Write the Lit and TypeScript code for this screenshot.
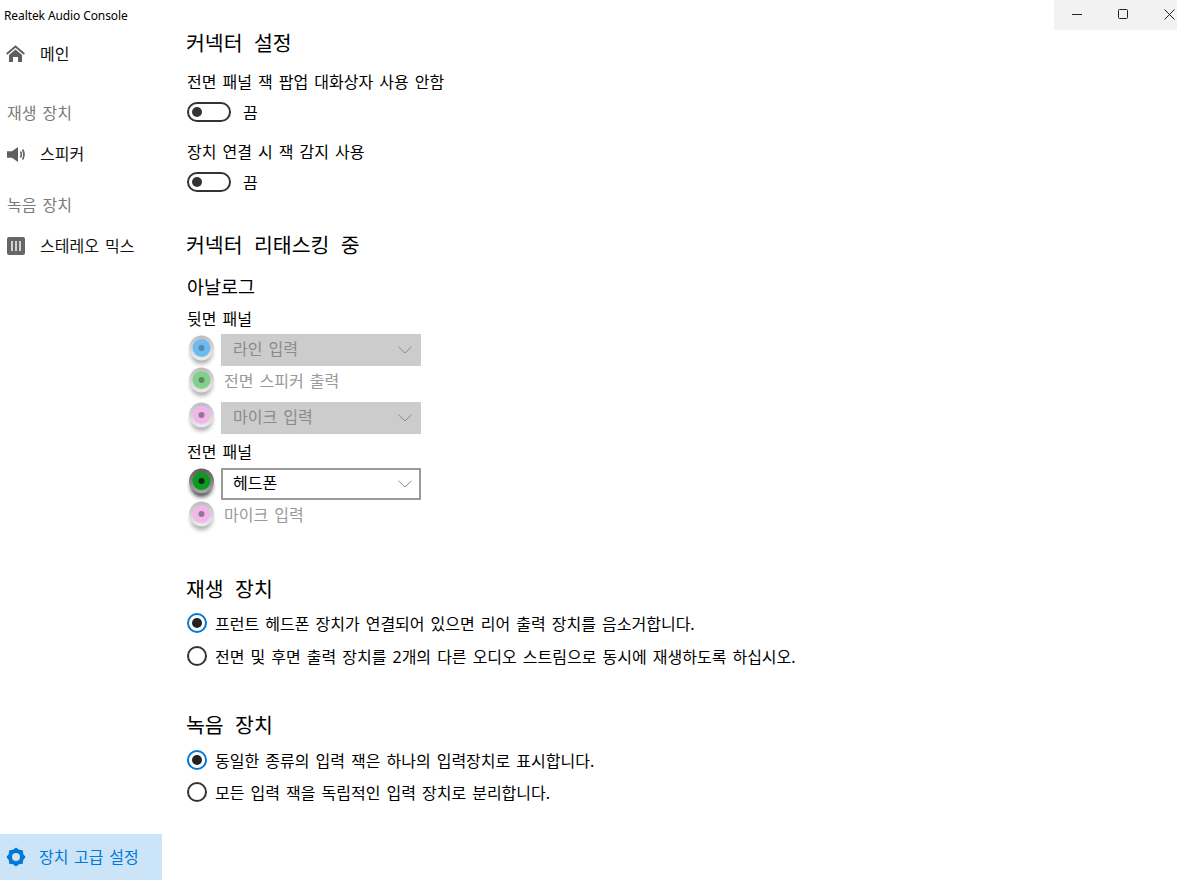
import { LitElement, html, css, svg } from 'lit';
import { customElement } from 'lit/decorators.js';

interface JackColors {
  disc: string;
  dot: string;
  rimTop: string;
  rimBottom: string;
  shadow: number;
}

const BLUE: JackColors = { disc: '#6cbaf2', dot: '#5d86a3', rimTop: '#bdbdbd', rimBottom: '#ececec', shadow: 0.32 };
const GREEN: JackColors = { disc: '#82d08c', dot: '#5f8a66', rimTop: '#bdbdbd', rimBottom: '#ececec', shadow: 0.32 };
const PINK: JackColors = { disc: '#f2b6ec', dot: '#8f7a8d', rimTop: '#bdbdbd', rimBottom: '#ececec', shadow: 0.32 };
const ACTIVE: JackColors = { disc: '#0c9a22', dot: '#0b2a10', rimTop: '#5c5c5c', rimBottom: '#a8a8a8', shadow: 0.7 };

const jack = (c: JackColors, top: number) => {
  const id = c.disc.slice(1);
  return html`
    <svg class="jack" style="top:${top}px" width="30" height="36" viewBox="0 0 30 36">
      <defs>
        <linearGradient id="rim${id}" x1="0" y1="0" x2="0" y2="1">
          <stop offset="0" stop-color=${c.rimTop}></stop>
          <stop offset="1" stop-color=${c.rimBottom}></stop>
        </linearGradient>
        <filter id="blur${id}" x="-30%" y="-30%" width="160%" height="160%">
          <feGaussianBlur stdDeviation="2"></feGaussianBlur>
        </filter>
      </defs>
      <ellipse cx="14.5" cy="20" rx="11" ry="11" fill="#000" fill-opacity=${c.shadow} filter="url(#blur${id})"></ellipse>
      <circle cx="14.5" cy="15" r="12.5" fill="url(#rim${id})"></circle>
      <circle cx="14.5" cy="15" r="9" fill=${c.disc}></circle>
      <circle cx="14.5" cy="15" r="3" fill=${c.dot}></circle>
    </svg>
  `;
};

const chevron = svg`<svg class="chev" width="14" height="8" viewBox="0 0 14 8"><path d="M0.5 0.8 L7 7 L13.5 0.8" fill="none" stroke="currentColor" stroke-width="1"></path></svg>`;

// 8 toothed gear outline around the middle of a 20 box
const gearPoints = () => {
  const pts: string[] = [];
  for (let i = 0; i < 16; i++) {
    const a = (i * Math.PI) / 8 - Math.PI / 2;
    const r = i % 2 === 0 ? 9.6 : 7.8;
    pts.push(`${i === 0 ? 'M' : 'L'}${(10 + r * Math.cos(a)).toFixed(2)} ${(10 + r * Math.sin(a)).toFixed(2)}`);
  }
  return pts.join(' ') + ' Z';
};

@customElement('app-root')
export class AppRoot extends LitElement {
  static styles = css`
    :host {
      display: block;
      width: 1177px;
      height: 880px;
      background: #fff;
      font-family: "Noto Sans", "Noto Sans CJK KR", sans-serif;
      color: #000;
      overflow: hidden;
    }
    .window {
      display: flex;
      height: 880px;
      position: relative;
    }
    .t {
      margin-bottom: 2px;
      word-spacing: 1.9px;
    }
    .side {
      width: 162px;
      display: flex;
      flex-direction: column;
      flex-shrink: 0;
    }
    .title {
      height: 30px;
      line-height: 32px;
      padding-left: 4px;
      font-size: 12px;
      letter-spacing: -0.1px;
    }
    .nav {
      display: flex;
      align-items: center;
      height: 24px;
      padding-left: 6px;
      gap: 14px;
      font-size: 16px;
      color: #111;
    }
    .nav svg {
      width: 20px;
      height: 20px;
      flex-shrink: 0;
    }
    .group {
      height: 24px;
      line-height: 24px;
      padding-left: 7px;
      font-size: 16px;
      word-spacing: 1.9px;
      color: #7a7a7a;
    }
    .spacer {
      flex: 1;
    }
    .bottom {
      height: 46px;
      background: #cce4f7;
      color: #0078d7;
      gap: 13px;
    }
    .bottom .t {
      word-spacing: 1.5px;
    }
    .main {
      padding: 28px 0 0 25px;
      flex: 1;
      display: flex;
      flex-direction: column;
    }
    .h {
      height: 30px;
      line-height: 31px;
      font-size: 20.5px;
      word-spacing: 6px;
      margin-left: -1px;
    }
    .sub {
      height: 22px;
      line-height: 24px;
      font-size: 18.5px;
    }
    .lbl {
      height: 22px;
      line-height: 22px;
      font-size: 16px;
      word-spacing: 1.9px;
    }
    .toggle-row {
      height: 24px;
      display: flex;
      align-items: center;
      font-size: 16px;
      gap: 12px;
      margin-top: 7px;
    }
    .toggle-row .t,
    .radio-row .t {
      margin-bottom: 0;
    }
    .toggle {
      width: 44px;
      height: 20px;
      box-sizing: border-box;
      border: 2px solid #333;
      border-radius: 10px;
      display: flex;
      align-items: center;
      padding-left: 3px;
    }
    .toggle i {
      width: 10px;
      height: 10px;
      border-radius: 50%;
      background: #333;
      display: block;
    }
    .jack-row {
      display: flex;
      align-items: center;
      height: 32px;
      font-size: 16px;
    }
    .jack-row.text {
      height: 30px;
      color: #999;
    }
    .jack-row.text .t {
      padding-left: 3px;
    }
    .jack-cell {
      width: 30px;
      height: 32px;
      margin-right: 4px;
      position: relative;
    }
    .jack {
      display: block;
      position: absolute;
      left: 0;
    }
    .combo {
      width: 200px;
      height: 32px;
      box-sizing: border-box;
      background: #cccccc;
      color: #8a8a8a;
      display: flex;
      align-items: center;
      justify-content: space-between;
      padding: 0 9px 0 12px;
    }
    .combo.on {
      background: #fff;
      color: #000;
      border: 2px solid #999;
      padding: 0 7px 0 10px;
    }
    .combo .t {
      margin-bottom: 4px;
    }
    .chev {
      color: #8a8a8a;
    }
    .radio-row {
      display: flex;
      align-items: center;
      height: 24px;
      gap: 8px;
      font-size: 16px;
    }
    .radio {
      width: 20px;
      height: 20px;
      box-sizing: border-box;
      border-radius: 50%;
      border: 2px solid #333;
      display: flex;
      align-items: center;
      justify-content: center;
      flex-shrink: 0;
    }
    .radio.on {
      border-color: #0078d7;
    }
    .radio.on i {
      display: block;
      width: 10px;
      height: 10px;
      border-radius: 50%;
      background: #222;
    }
    .caption {
      position: absolute;
      top: 0;
      left: 1054px;
      right: 0;
      height: 30px;
      padding-bottom: 2px;
      box-sizing: border-box;
      background: #f2f2f2;
      display: flex;
    }
    .caption div {
      width: 46px;
      flex-shrink: 0;
      display: flex;
      align-items: center;
      justify-content: center;
    }
    .mt4 { margin-top: 4px; }
    .mt5 { margin-top: 5px; }
    .mt6 { margin-top: 6px; }
    .mt7 { margin-top: 7px; }
    .mt8 { margin-top: 8px; }
    .mt9 { margin-top: 9px; }
    .mt11 { margin-top: 11px; }
    .mt13 { margin-top: 13px; }
    .mt15 { margin-top: 15px; }
    .mt17 { margin-top: 17px; }
    .mt36 { margin-top: 36px; }
    .mt42 { margin-top: 42px; }
    .mt44 { margin-top: 44px; }
  `;

  private radio(label: string, on: boolean, cls: string) {
    return html`<div class="radio-row ${cls}">
      <span class="radio ${on ? 'on' : ''}">${on ? html`<i></i>` : ''}</span><span class="t">${label}</span>
    </div>`;
  }

  private toggle() {
    return html`<div class="toggle-row"><span class="toggle"><i></i></span><span class="t">끔</span></div>`;
  }

  private combo(label: string, on = false) {
    return html`<div class="combo ${on ? 'on' : ''}"><span class="t">${label}</span>${chevron}</div>`;
  }

  render() {
    return html`
      <div class="window">
        <div class="side">
          <div class="title">Realtek Audio Console</div>
          <div class="nav" style="margin-top:12px">
            <svg viewBox="0 0 20 20"><path d="M0.7 10 L9.5 2.5 L18.3 10" fill="none" stroke="#5f5f5f" stroke-width="2"></path><path d="M3 11 L9.5 5.5 L16 11 V18 H12 V13 H7 V18 H3 Z" fill="#5f5f5f"></path></svg>
            <span class="t">메인</span>
          </div>
          <div class="group" style="margin-top:35px">재생 장치</div>
          <div class="nav" style="margin-top:17px">
            <svg viewBox="0 0 20 20"><path d="M1 7.3 H6 L12 3 V18 L6 13.7 H1 Z" fill="#5f5f5f"></path><path d="M14.4 7.5 Q16.4 10.5 14.4 13.5 M16.6 5.5 Q19.4 10.5 16.6 15.5" fill="none" stroke="#5f5f5f" stroke-width="1.6"></path></svg>
            <span class="t">스피커</span>
          </div>
          <div class="group" style="margin-top:27px">녹음 장치</div>
          <div class="nav" style="margin-top:17px">
            <svg viewBox="0 0 20 20"><rect x="1" y="1" width="18" height="18" rx="2" fill="#666"></rect><path d="M6 5 V15 M10 5 V15 M14 5 V15" stroke="#e4e4e4" stroke-width="1.7"></path></svg>
            <span class="t">스테레오 믹스</span>
          </div>
          <div class="spacer"></div>
          <div class="nav bottom">
            <svg viewBox="0 0 20 20"><path fill-rule="evenodd" fill="#0078d7" d="${gearPoints()} M10 6 A4 4 0 1 0 10 14 A4 4 0 1 0 10 6 Z"></path></svg>
            <span class="t">장치 고급 설정</span>
          </div>
        </div>
        <div class="main">
          <div class="h">커넥터 설정</div>
          <div class="lbl mt13">전면 패널 잭 팝업 대화상자 사용 안함</div>
          ${this.toggle()}
          <div class="lbl mt17">장치 연결 시 잭 감지 사용</div>
          ${this.toggle()}
          <div class="h mt36">커넥터 리태스킹 중</div>
          <div class="sub mt15">아날로그</div>
          <div class="lbl mt11">뒷면 패널</div>
          <div class="jack-row mt4"><div class="jack-cell">${jack(BLUE, -1)}</div>${this.combo('라인 입력')}</div>
          <div class="jack-row text"><div class="jack-cell">${jack(GREEN, 0)}</div><span class="t">전면 스피커 출력</span></div>
          <div class="jack-row mt6"><div class="jack-cell">${jack(PINK, -2)}</div>${this.combo('마이크 입력')}</div>
          <div class="lbl mt7">전면 패널</div>
          <div class="jack-row mt5"><div class="jack-cell">${jack(ACTIVE, -2)}</div>${this.combo('헤드폰', true)}</div>
          <div class="jack-row text"><div class="jack-cell">${jack(PINK, 0)}</div><span class="t">마이크 입력</span></div>
          <div class="h mt44">재생 장치</div>
          ${this.radio('프런트 헤드폰 장치가 연결되어 있으면 리어 출력 장치를 음소거합니다.', true, 'mt7')}
          ${this.radio('전면 및 후면 출력 장치를 2개의 다른 오디오 스트림으로 동시에 재생하도록 하십시오.', false, 'mt9')}
          <div class="h mt42">녹음 장치</div>
          ${this.radio('동일한 종류의 입력 잭은 하나의 입력장치로 표시합니다.', true, 'mt8')}
          ${this.radio('모든 입력 잭을 독립적인 입력 장치로 분리합니다.', false, 'mt8')}
        </div>
        <div class="caption">
          <div><svg width="10" height="10" viewBox="0 0 10 10"><path d="M0 5.5 H10" stroke="#222" stroke-width="1"></path></svg></div>
          <div><svg width="10" height="10" viewBox="0 0 10 10"><rect x="0.5" y="0.5" width="9" height="9" rx="1" fill="none" stroke="#222"></rect></svg></div>
          <div><svg width="11" height="11" viewBox="0 0 11 11"><path d="M0.5 0.5 L10.5 10.5 M10.5 0.5 L0.5 10.5" stroke="#222" stroke-width="1"></path></svg></div>
        </div>
      </div>
    `;
  }
}
